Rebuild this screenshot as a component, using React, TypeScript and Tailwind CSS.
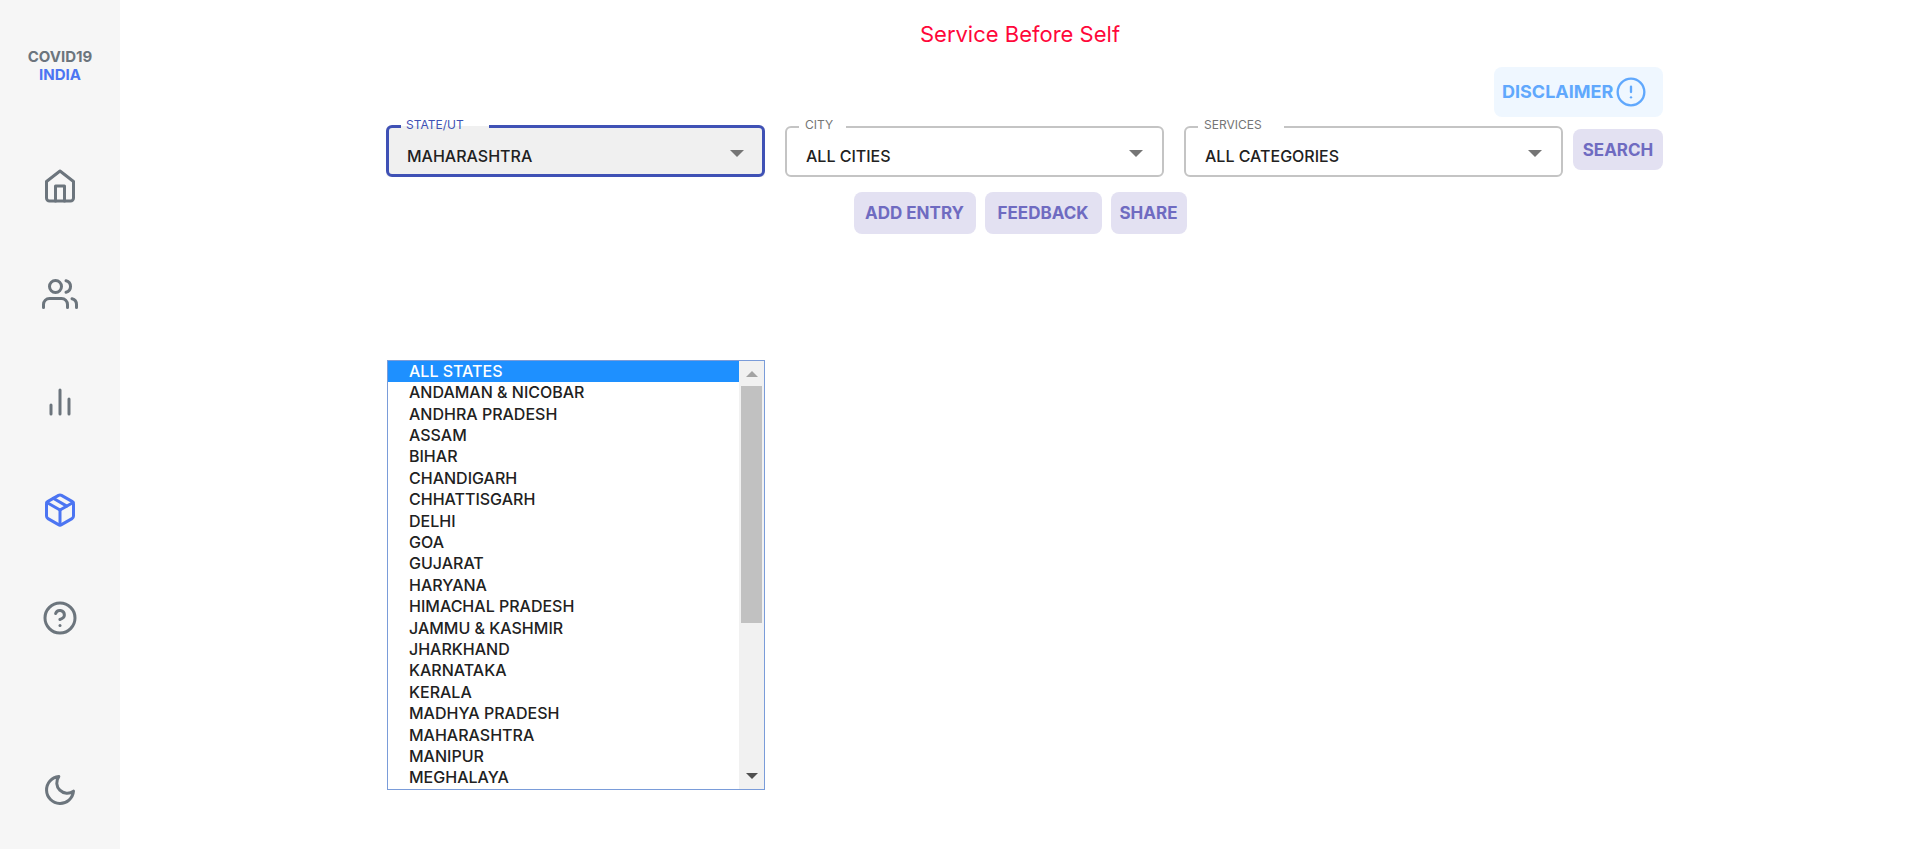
import React, { useState } from "react";
import { FiAlertCircle, FiBarChart2, FiHelpCircle, FiHome, FiMoon, FiPackage, FiUsers } from "react-icons/fi";

const STATES = [
  "ALL STATES",
  "ANDAMAN & NICOBAR",
  "ANDHRA PRADESH",
  "ASSAM",
  "BIHAR",
  "CHANDIGARH",
  "CHHATTISGARH",
  "DELHI",
  "GOA",
  "GUJARAT",
  "HARYANA",
  "HIMACHAL PRADESH",
  "JAMMU & KASHMIR",
  "JHARKHAND",
  "KARNATAKA",
  "KERALA",
  "MADHYA PRADESH",
  "MAHARASHTRA",
  "MANIPUR",
  "MEGHALAYA",
];

const NAV = [
  { name: "Home", Icon: FiHome, active: false },
  { name: "Demographics", Icon: FiUsers, active: false },
  { name: "Deep Dive", Icon: FiBarChart2, active: false },
  { name: "Essentials", Icon: FiPackage, active: true },
  { name: "About", Icon: FiHelpCircle, active: false },
];

const actionClass =
  "flex items-center justify-center rounded-lg bg-[#e3e1f2] text-[17px] leading-6 font-bold text-[#6f6bc1]";

type SelectFieldProps = {
  id: string;
  label: string;
  value: string;
  options: string[];
  notchClass: string;
  focused?: boolean;
  onChange: (value: string) => void;
};

function SelectField({ id, label, value, options, notchClass, focused = false, onChange }: SelectFieldProps) {
  return (
    <div className={`relative h-[51px] min-w-0 flex-1 rounded ${focused ? "bg-[#f0f0f0]" : "bg-white"}`}>
      <label
        htmlFor={id}
        className={`absolute -top-[9px] left-5 z-10 text-xs leading-4 ${focused ? "text-[#3f51b5]" : "text-[#757575]"}`}
      >
        {label}
      </label>
      <select
        id={id}
        value={value}
        onChange={(event) => onChange(event.target.value)}
        className="h-full w-full appearance-none bg-transparent pt-2 pr-10 pl-[21px] text-base font-medium text-[#212121] outline-none"
      >
        {options.map((option) => (
          <option key={option}>{option}</option>
        ))}
      </select>
      <svg viewBox="0 0 14 7" className="pointer-events-none absolute top-6 right-[21px] h-[7px] w-3.5 fill-[#757575]" aria-hidden="true">
        <path d="M0 0h14L7 7z" />
      </svg>
      <fieldset
        aria-hidden="true"
        className={`pointer-events-none absolute inset-x-0 -top-[5px] bottom-0 rounded-md pl-3 ${
          focused ? "border-3 border-[#3f51b5]" : "border-2 border-[#c4c4c4]"
        }`}
      >
        <legend className={`h-[11px] ${notchClass}`} />
      </fieldset>
    </div>
  );
}

export default function App() {
  const [region, setRegion] = useState("MAHARASHTRA");
  const [city, setCity] = useState("ALL CITIES");
  const [service, setService] = useState("ALL CATEGORIES");

  return (
    <div className="flex min-h-screen bg-white font-['Inter','Liberation_Sans',sans-serif]">
      <aside className="flex w-[120px] shrink-0 flex-col items-center bg-[#f6f6f6] pt-12 pb-[41px] text-[#6c757d]">
        <a href="#home" className="text-center text-[15px] leading-[18px] font-bold">
          <span className="block">COVID19</span>
          <span className="block text-[#4c75f2]">INDIA</span>
        </a>
        <nav className="mt-[84px] flex flex-col gap-[72px]">
          {NAV.map(({ name, Icon, active }) => (
            <a key={name} href="#nav" aria-label={name} className={active ? "text-[#4c75f2]" : ""}>
              <Icon size={36} />
            </a>
          ))}
        </nav>
        <button type="button" aria-label="Dark mode" className="mt-auto">
          <FiMoon size={36} />
        </button>
      </aside>

      <main className="flex min-w-0 flex-1 flex-col items-center px-4">
        <p className="mt-5 text-[22px] leading-7 text-[#ff073a]">Service Before Self</p>

        <div className="mt-[19px] w-full max-w-[1286px] pl-[9px]">
          <div className="flex justify-end">
            <button
              type="button"
              className="flex h-[50px] w-[169px] items-center gap-0.5 rounded-lg bg-[#eff7ff] pl-2 text-lg leading-6 font-bold text-[#60a8fd]"
            >
              DISCLAIMER
              <FiAlertCircle size={32} strokeWidth={1.75} />
            </button>
          </div>

          <form className="mt-[9px] flex" onSubmit={(event) => event.preventDefault()}>
            <div className="flex min-w-0 flex-1 gap-5">
              <SelectField id="state" label="STATE/UT" value={region} options={STATES} notchClass="w-[88px]" focused onChange={setRegion} />
              <SelectField id="city" label="CITY" value={city} options={["ALL CITIES"]} notchClass="w-[47px]" onChange={setCity} />
              <SelectField id="services" label="SERVICES" value={service} options={["ALL CATEGORIES"]} notchClass="w-[86px]" onChange={setService} />
            </div>
            <button type="submit" className={`mt-[3px] ml-2.5 h-[41px] w-[90px] ${actionClass}`}>
              SEARCH
            </button>
          </form>
        </div>

        <div className="mt-[15px] flex gap-[9px]">
          <button type="button" className={`h-[42px] w-[122px] ${actionClass}`}>ADD ENTRY</button>
          <button type="button" className={`h-[42px] w-[117px] ${actionClass}`}>FEEDBACK</button>
          <button type="button" className={`h-[42px] w-[76px] ${actionClass}`}>SHARE</button>
        </div>

        <div className="mt-[126px] w-full max-w-[1286px] pl-2.5">
          <div className="flex w-[378px] border border-[#7a9cd9] bg-white">
            <ul role="listbox" aria-label="STATE/UT" className="flex h-[428px] flex-1 flex-col text-base font-medium text-[#212121]">
              {STATES.map((name, index) => (
                <li
                  key={name}
                  role="option"
                  aria-selected={index === 0}
                  onClick={() => setRegion(name)}
                  className={`flex min-h-0 flex-1 items-center pb-0.5 pl-[21px] leading-5 ${index === 0 ? "bg-[#1e90ff] text-white" : ""}`}
                >
                  {name}
                </li>
              ))}
            </ul>
            <div className="flex w-[25px] flex-col items-center bg-[#f1f1f1]" aria-hidden="true">
              <div className="flex h-[25px] items-center justify-center">
                <svg viewBox="0 0 12 6" className="h-1.5 w-3 fill-[#a3a3a3]">
                  <path d="M0 6h12L6 0z" />
                </svg>
              </div>
              <div className="h-[237px] w-[21px] bg-[#c1c1c1]" />
              <div className="mt-auto flex h-[27px] items-center justify-center">
                <svg viewBox="0 0 12 6" className="h-1.5 w-3 fill-[#505050]">
                  <path d="M0 0h12L6 6z" />
                </svg>
              </div>
            </div>
          </div>
        </div>
      </main>
    </div>
  );
}
